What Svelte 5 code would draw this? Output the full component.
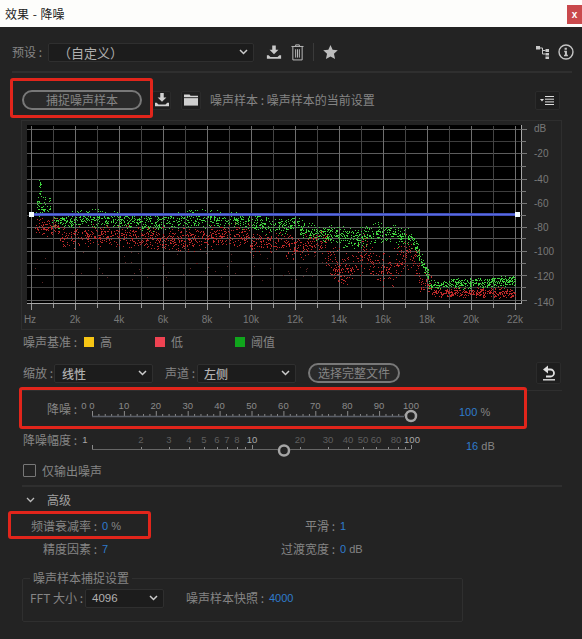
<script>
  function rng(seed) {
    let a = seed;
    return () => {
      a = (a + 0x6d2b79f5) | 0;
      let t = Math.imul(a ^ (a >>> 15), 1 | a);
      t = (t + Math.imul(t ^ (t >>> 7), 61 | t)) ^ t;
      return ((t ^ (t >>> 14)) >>> 0) / 4294967296;
    };
  }
  const r = rng(1234);
  const g = () => r() + r() - 1;

  function greenAt(x) {
    if (x < 52) return { c: 206, s: 14 };
    if (x < 250) return { c: 220 + 2 * Math.sin(x / 19), s: 10 };
    if (x < 300) return { c: 224 + 3 * Math.sin(x / 7), s: 10 };
    if (x < 340) return { c: 229 + (x - 300) * 0.15, s: 10 };
    if (x < 415) return { c: 235 + 3 * Math.sin(x / 9), s: 12 };
    if (x < 429) return { c: 245 + (x - 415) * 2.4, s: 9 };
    return { c: 285 - (x - 429) * 0.05, s: 6 };
  }
  function redAt(x) {
    if (x < 60) return { c: 227, s: 10 };
    if (x < 250) return { c: 237 + 2 * Math.sin(x / 23), s: 13 };
    if (x < 325) return { c: 244 + Math.sin(x / 9) * 3, s: 13 };
    if (x < 420) return { c: 250 + 20 * Math.abs(Math.sin((x - 325) / 13)), s: 20 };
    if (x < 432) return { c: 284, s: 12 };
    return { c: 292.500, s: 5.500 };
  }
  function dots(fn, n, x0, x1) {
    let d = '';
    for (let i = 0; i < n; i++) {
      const x = Math.round(x0 + r() * (x1 - x0));
      const b = fn(x);
      const y = Math.round(b.c + g() * b.s);
      d += `M${x} ${y}h1v1h-1z`;
    }
    return d;
  }
  let green = dots(greenAt, 1900, 36, 515);
  for (let i = 0; i < 16; i++) {
    green += `M${39 + Math.round(r() * 2)} ${178 + Math.round(r() * 20)}h1v1h-1z`;
  }
  const red = dots(redAt, 1800, 34, 515);
  let sparse = '';
  for (let i = 0; i < 60; i++) {
    const x = Math.round(34 + r() * 300);
    const y = Math.round(252 + r() * 30);
    sparse += `M${x} ${y}h1v1h-1z`;
  }

  const X0 = 31, STEP = 22;
  const vert = Array.from({ length: 23 }, (_, i) => ({ x: X0 + i * STEP + 0.5, major: i % 2 === 0 }));
  const horiz = [129, 141, 153, 166, 179, 191, 203, 215, 227, 238, 251, 263, 275, 287, 300];
  const hLabels = [['dB', 128], ['-20', 153], ['-40', 179], ['-60', 203], ['-80', 227], ['-100', 251], ['-120', 276], ['-140', 302]];
  const xLabels = ['Hz', '2k', '4k', '6k', '8k', '10k', '12k', '14k', '16k', '18k', '20k', '22k'];

  const s1Ticks = Array.from({ length: 51 }, (_, i) => ({ x: 92.5 + i * 6.38, major: i % 5 === 0 }));
  const s1Labels = [0, 10, 20, 30, 40, 50, 60, 70, 80, 90, 100].map((v, i) => ({ v, x: 92 + i * 31.9 }));
  const s2Labels = [
    ['2', 141, 0], ['3', 169, 0], ['4', 189, 0], ['5', 204, 0], ['6', 217, 0], ['7', 227, 0], ['8', 237, 0],
    ['10', 252, 1], ['20', 300, 0], ['30', 328, 0], ['40', 348, 0], ['50', 363, 0], ['60', 376, 0], ['80', 396, 0], ['100', 412, 1]
  ];
  const s2Ticks = [92, 141, 169, 189, 204, 217, 227, 237, 245, 252, 300, 328, 348, 363, 376, 388, 398, 405, 411];
</script>

<div class="win">
  <header class="title">
    <span>效果 - 降噪</span>
    <button class="close">x</button>
  </header>

  <div class="row preset">
    <span class="lab w-preset">预设 :</span>
    <div class="select sel-preset"><span>（自定义）</span>
      <svg class="chev" width="9" height="6" viewBox="0 0 9 6"><path d="M1 1l3.500 3.500L8 1" fill="none" stroke="#ccc" stroke-width="1.500"/></svg>
    </div>
    <svg class="ic i-save" width="16" height="15" viewBox="0 0 18 16"><path d="M7 0h4v5h3l-5 5-5-5h3z" fill="#c8c8c8"/><path d="M1 11h2l2 2h8l2-2h2v4H1z" fill="#c8c8c8"/></svg>
    <svg class="ic i-trash" width="13" height="17" viewBox="0 0 14 18"><path d="M5 2V.8h4V2M.5 2.500h13M2 3v14h10V3M5 5.500v9M7 5.500v9M9 5.500v9" fill="none" stroke="#c4c4c4" stroke-width="1"/></svg>
    <i class="vsep"></i>
    <svg class="ic i-star" width="15" height="14" viewBox="0 0 16 15"><path d="M8 0l2.300 5 5.500.6-4.100 3.700L12.900 15 8 12.200 3.100 15l1.200-5.700L.2 5.600 5.700 5z" fill="#bdbdbd"/></svg>
    <svg class="ic i-net" width="13" height="13" viewBox="0 0 13 13"><path d="M0 0h4v3.500H0zM9.500 3h3.500v3H9.500zM9.500 7h3.500v2.500H9.500zM9.500 10.500h3.500V13H9.500z" fill="#c8c8c8"/><path d="M4 2h2.500v6H9.500M6.500 4.500H9.500" fill="none" stroke="#c8c8c8"/></svg>
    <svg class="ic i-info" width="16" height="16" viewBox="0 0 17 17"><circle cx="8.500" cy="8.500" r="7.400" fill="none" stroke="#c4c4c4" stroke-width="1.500"/><path d="M7 4h2.400v2H7zM6.600 7.200h2.900v4.300h1V13H6.400v-1.500h1V8.700h-.8z" fill="#c4c4c4"/></svg>
  </div>
  <div class="sep sep-a"></div>

  <div class="row capture">
    <button class="pill pill-cap">捕捉噪声样本</button>
    <div class="ibtn ib-save">
      <svg width="16" height="14" viewBox="0 0 18 16"><path d="M7 0h4v5h3l-5 5-5-5h3z" fill="#d0d0d0"/><path d="M1 11h2l2 2h8l2-2h2v4H1z" fill="#d0d0d0"/></svg>
    </div>
    <div class="ibtn ib-folder">
      <svg width="14" height="12" viewBox="0 0 15 12"><path d="M0 0h6l1 1.500h8V3H0z" fill="#d4d4d4"/><path d="M0 4h15v8H0z" fill="#cfcfcf"/></svg>
    </div>
    <span class="lab sample">噪声样本 : 噪声样本的当前设置</span>
    <div class="ibtn ib-menu">
      <svg width="14" height="9" viewBox="0 0 14 9"><path d="M0 3h4L2 5.500z" fill="#ddd"/><path d="M5 .5h9M5 3.200h9M5 5.900h9M5 8.500h9" stroke="#ddd"/></svg>
    </div>
  </div>

  <div class="chart">
    <svg width="539" height="208" viewBox="22 121 539 208">
      <rect x="27" y="125" width="494" height="178" fill="#000"/>
      {#each horiz as y, i}
        <path d="M27 {y + 0.5}H521" stroke={i % 2 === 0 || i === 9 ? '#5c5c5c' : '#3d3d3d'}/>
      {/each}
      {#each vert as v}
        <path d="M{v.x} 126V303" stroke={v.major ? '#6e6e6e' : '#444'}/>
        <path d="M{v.x} 303V{v.major ? 310 : 308}" stroke="#9a9a9a"/>
      {/each}
      <path d={red} fill="#bf2a2a"/>
      <path d={green} fill="#40d240"/>
      <path d={sparse} fill="#5e2626"/>
      <path d="M27 303.500H521.500M521.500 125V304" stroke="#a8a8a8" fill="none"/>
      {#each horiz as y, i}
        <path d="M521 {y + 0.5}H{i % 2 === 0 ? 527 : 526}" stroke="#777"/>
      {/each}
      <rect x="31" y="213" width="486" height="3" fill="#3f4fb8"/>
      <rect x="31" y="214" width="486" height="1" fill="#5a6ae0"/>
      <rect x="29" y="212" width="5" height="5" fill="#f2fbff"/>
      <rect x="515" y="212" width="5" height="5" fill="#f2fbff"/>
      {#each hLabels as [t, y]}
        <text class="ax" x="534" y={y + 4}>{t}</text>
      {/each}
      {#each xLabels as t, i}
        <text class="ax" x={X0 + i * 44 - (i === 0 ? 1 : 0)} y="323" text-anchor="middle">{t}</text>
      {/each}
    </svg>
  </div>

  <div class="row legend">
    <span class="lab w-legend">噪声基准 :</span>
    <i class="sw yellow"></i><span class="lab t-hi">高</span>
    <i class="sw red"></i><span class="lab t-lo">低</span>
    <i class="sw grn"></i><span class="lab t-th">阈值</span>
  </div>

  <div class="row controls">
    <span class="lab w-zoom">缩放 :</span>
    <div class="select sel-zoom"><span>线性</span>
      <svg class="chev" width="9" height="6" viewBox="0 0 9 6"><path d="M1 1l3.500 3.500L8 1" fill="none" stroke="#ccc" stroke-width="1.500"/></svg>
    </div>
    <span class="lab w-ch">声道 :</span>
    <div class="select sel-ch"><span>左侧</span>
      <svg class="chev" width="9" height="6" viewBox="0 0 9 6"><path d="M1 1l3.500 3.500L8 1" fill="none" stroke="#ccc" stroke-width="1.500"/></svg>
    </div>
    <button class="pill pill-full">选择完整文件</button>
    <div class="ibtn ib-reset">
      <svg width="14" height="16" viewBox="0 0 14 16"><path d="M1 4.500L6 .5v8z" fill="#e0e0e0"/><path d="M5 4.500h3.500a3.500 3.500 0 0 1 0 7H4" fill="none" stroke="#e0e0e0" stroke-width="1.800"/><path d="M1 14.800h12" stroke="#e0e0e0" stroke-width="1.400"/></svg>
    </div>
  </div>
  <div class="sep sep-b"></div>

  <div class="row slider s1">
    <span class="lab slab s1-lab">降噪 :</span>
    <svg width="350" height="30" viewBox="80 396 350 30">
      <text class="tk" x="84" y="409" text-anchor="middle">0</text>
      {#each s1Labels as l}
        <text class="tk" x={l.x} y="409" text-anchor="middle">{l.v}</text>
      {/each}
      {#each s1Ticks as t}
        <path d="M{t.x} {t.major ? 411 : 414}V416" stroke="#8a8a8a"/>
      {/each}
      <path d="M92 416.500H404" stroke="#5b5f68" stroke-width="1.500"/>
      <circle cx="411" cy="416" r="5" fill="#232323" stroke="#a5a5a5" stroke-width="2.500"/>
    </svg>
    <span class="val v1"><b>100</b> %</span>
  </div>

  <div class="row slider s2">
    <span class="lab slab">降噪幅度 :</span>
    <svg width="350" height="26" viewBox="80 432 350 26">
      <text class="tk on" x="85" y="443" text-anchor="middle">1</text>
      {#each s2Labels as [t, x, on]}
        <text class={on ? 'tk on' : 'tk off'} x={x} y="443" text-anchor="middle">{t}</text>
      {/each}
      {#each s2Ticks as x, i}
        <path d="M{x + 0.5} {i === 0 || x === 252 || x === 411 ? 445 : 447}V449" stroke="#8a8a8a"/>
      {/each}
      <path d="M92 449.500H411" stroke="#666" stroke-width="1"/>
      <circle cx="284" cy="450.500" r="5" fill="#232323" stroke="#a5a5a5" stroke-width="2.500"/>
    </svg>
    <span class="val v2"><b>16</b> dB</span>
  </div>

  <div class="row check">
    <i class="box"></i><span class="lab">仅输出噪声</span>
  </div>
  <div class="sep sep-c"></div>

  <div class="row adv">
    <svg width="9" height="6" viewBox="0 0 9 6"><path d="M1 1l3.500 3.500L8 1" fill="none" stroke="#bbb" stroke-width="1.300"/></svg>
    <span class="lab">高级</span>
  </div>

  <div class="params p1">
    <span class="lab end">频谱衰减率 :</span><span class="val"><b>0</b> %</span>
    <span class="lab end">平滑 :</span><span class="val"><b>1</b></span>
  </div>
  <div class="params p2">
    <span class="lab end">精度因素 :</span><span class="val"><b>7</b></span>
    <span class="lab end">过渡宽度 :</span><span class="val"><b>0</b> dB</span>
  </div>

  <fieldset class="group">
    <legend>噪声样本捕捉设置</legend>
    <div class="row fft">
      <span class="lab w-fft">FFT 大小 :</span>
      <div class="select sel-fft"><span>4096</span>
        <svg class="chev" width="9" height="6" viewBox="0 0 9 6"><path d="M1 1l3.500 3.500L8 1" fill="none" stroke="#ccc" stroke-width="1.500"/></svg>
      </div>
      <span class="lab snap">噪声样本快照 :</span><span class="val"><b>4000</b></span>
    </div>
  </fieldset>

  <i class="mark m1"></i>
  <i class="mark m2"></i>
  <i class="mark m3"></i>
</div>

<style>
  :global(body) { margin: 0; background: #232323; }
  .win {
    position: relative;
    width: 582px;
    height: 639px;
    overflow: hidden;
    background: #232323;
    font: 12px "Noto Sans CJK SC", "Liberation Sans", sans-serif;
    color: #858585;
  }
  .title {
    height: 27px;
    background: #fdfdfb;
    color: #222;
    font-size: 12px;
    word-spacing: 1px;
    display: flex;
    align-items: center;
    justify-content: space-between;
    padding-left: 5px;
    box-sizing: border-box;
  }
  .close {
    width: 15px;
    height: 19px;
    margin-top: 1px;
    padding: 0;
    border: 0;
    background: #c9494c;
    color: #fff;
    font: bold 10px "Liberation Sans", sans-serif;
  }
  .row { display: flex; align-items: center; }
  .lab { white-space: nowrap; line-height: 16px; flex: none; }
  .preset { height: 20px; margin-top: 15px; padding-left: 12px; }
  .w-preset { width: 36px; }
  .select {
    box-sizing: border-box;
    height: 19px;
    flex: none;
    display: flex;
    align-items: center;
    justify-content: space-between;
    background: #1c1c1c;
    border: 1px solid #2f2f2f;
    border-radius: 2px;
    color: #b0b0b0;
    font-size: 12px;
    font-weight: 500;
    padding: 0 5px 0 7px;
  }
  .sel-preset { width: 206px; font-size: 13px; font-weight: 400; padding-left: 9px; }
  .ic { flex: none; }
  .i-save { margin-left: 12px; }
  .i-trash { margin-left: 9px; }
  .vsep { width: 1px; height: 18px; background: #3a3a3a; margin-left: 9px; flex: none; }
  .i-star { margin-left: 9px; }
  .i-net { margin-left: 198px; }
  .i-info { margin-left: 9px; }
  .sep { height: 2px; background: #2f2f2f; }
  .sep-a { margin: 9px 10px 0 12px; }
  .capture { height: 20px; margin-top: 17px; padding-left: 22px; }
  .pill {
    box-sizing: border-box;
    background: #2a2a2a;
    border: 2px solid #787878;
    border-radius: 12px;
    color: #858585;
    font: inherit;
    padding: 0;
    flex: none;
  }
  .pill-cap { width: 120px; height: 20px; line-height: 14px; }
  .ibtn {
    box-sizing: border-box;
    flex: none;
    display: flex;
    align-items: center;
    justify-content: center;
    background: #1e1e1e;
    border: 1px solid #2b2b2b;
    border-radius: 2px;
  }
  .ib-save { width: 19px; height: 19px; margin-left: 10px; }
  .ib-folder { width: 20px; height: 19px; margin-left: 10px; }
  .sample { margin-left: 9px; }
  .ib-menu { width: 25px; height: 19px; margin-left: 160px; }
  .chart {
    box-sizing: border-box;
    width: 539px;
    height: 208px;
    margin: 11px 0 0 22px;
    outline: 1px solid #2e2e2e;
  }
  .chart svg { display: block; }
  .ax { font: 10px "Liberation Sans", sans-serif; fill: #787878; }
  .legend { height: 16px; margin-top: 5px; padding-left: 23px; }
  .w-legend { width: 54px; }
  .sw { width: 10px; height: 10px; flex: none; }
  .yellow { background: #f6c514; margin-left: 7px; }
  .red { background: #ef4352; margin-left: 43px; }
  .grn { background: #10a51c; margin-left: 52px; }
  .t-hi, .t-lo, .t-th { margin-left: 6px; }
  .controls { height: 22px; margin-top: 12px; padding-left: 23px; }
  .w-zoom { width: 31px; }
  .sel-zoom { width: 99px; }
  .w-ch { width: 32px; margin-left: 12px; }
  .sel-ch { width: 99px; padding-left: 6px; }
  .pill-full { width: 92px; height: 20px; margin-left: 12px; line-height: 14px; }
  .ib-reset { width: 25px; height: 22px; margin-left: 136px; }
  .sep-b { height: 1px; margin: 6px 20px 0 22px; }
  .slider { align-items: flex-start; padding-left: 23px; }
  .slider svg { display: block; flex: none; }
  .slab { width: 54px; text-align: right; flex: none; }
  .s1 { height: 30px; margin-top: 5px; }
  .s1-lab { margin-top: 5px; }
  .s2 { height: 26px; margin-top: 6px; }
  .s1 svg { margin-left: 3px; }
  .s2 svg { margin-left: 3px; }
  .tk { font: 9.5px "Liberation Sans", sans-serif; fill: #8a8a8a; }
  .tk.on { fill: #a8a8a8; }
  .tk.off { fill: #5f5f5f; }
  .val { white-space: nowrap; color: #858585; font: 11px "Liberation Sans", sans-serif; line-height: 16px; }
  .val b { font-weight: normal; color: #2f7ccc; }
  .v1 { margin: 8px 0 0 29px; }
  .v2 { margin: 6px 0 0 36px; }
  .check { height: 15px; margin-top: 5px; padding-left: 23px; }
  .box {
    box-sizing: border-box;
    width: 13px;
    height: 13px;
    border: 1px solid #777;
    border-radius: 1px;
    margin-right: 6px;
  }
  .sep-c { margin: 7px 20px 0 22px; }
  .adv { height: 16px; margin-top: 5px; padding-left: 26px; }
  .adv .lab { margin-left: 12px; color: #a0a0a0; }
  .params { display: grid; grid-template-columns: 97px 60px 178px auto; align-items: center; height: 16px; }
  .p1 { margin-top: 10px; }
  .p2 { margin-top: 7px; }
  .params .val { padding-left: 5px; }
  .end { text-align: right; }
  .group {
    box-sizing: border-box;
    width: 441px;
    height: 51px;
    margin: 14px 0 0 22px;
    padding: 0 0 0 7px;
    border: 1px solid #2f2f2f;
    border-radius: 2px;
    min-inline-size: 0;
  }
  .group legend { padding: 0 3px; margin-left: 0; font-size: 12px; line-height: 14px; color: #858585; }
  .fft { height: 20px; margin-top: 3px; }
  .w-fft { width: 55px; }
  .sel-fft { width: 79px; padding-left: 6px; font: 500 11.5px "Liberation Sans", sans-serif; }
  .snap { margin-left: 22px; margin-right: 4px; width: 79px; }
  .mark {
    position: absolute;
    box-sizing: border-box;
    border: 3px solid #e1251b;
    border-radius: 3px;
  }
  .m1 { left: 10px; top: 78px; width: 143px; height: 40px; }
  .m2 { left: 19px; top: 387px; width: 508px; height: 42px; }
  .m3 { left: 8px; top: 511px; width: 143px; height: 28px; }
</style>
